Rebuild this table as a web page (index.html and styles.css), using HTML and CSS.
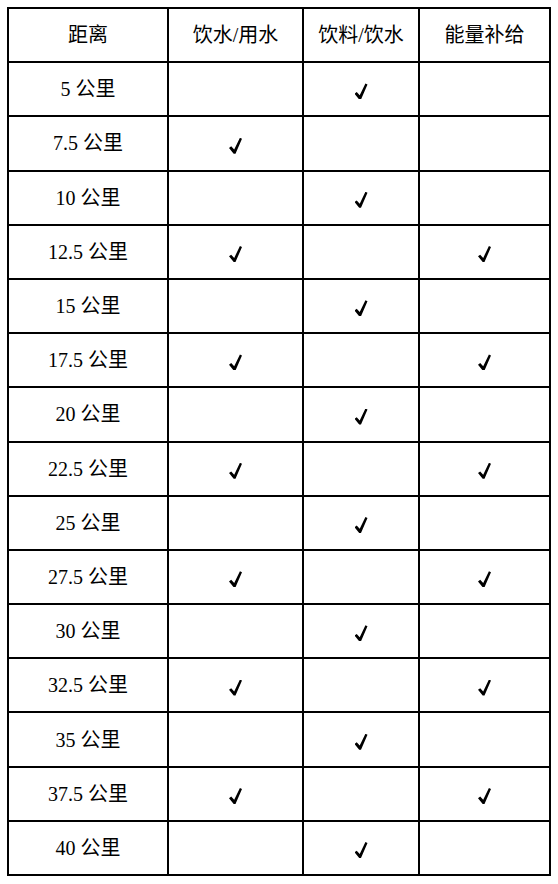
FILE: index.html
```html
<!DOCTYPE html>
<html lang="zh-CN">
<head>
<meta charset="utf-8">
<title>补给站</title>
<link rel="stylesheet" href="styles.css">
</head>
<body>
<table class="supply">
  <colgroup>
    <col class="c1"><col class="c2"><col class="c3"><col class="c4">
  </colgroup>
  <thead>
    <tr><th>距离</th><th>饮水/用水</th><th>饮料/饮水</th><th>能量补给</th></tr>
  </thead>
  <tbody>
    <tr><td>5 公里</td><td></td><td><span class="ck"></span></td><td></td></tr>
    <tr><td>7.5 公里</td><td><span class="ck"></span></td><td></td><td></td></tr>
    <tr><td>10 公里</td><td></td><td><span class="ck"></span></td><td></td></tr>
    <tr><td>12.5 公里</td><td><span class="ck"></span></td><td></td><td><span class="ck"></span></td></tr>
    <tr><td>15 公里</td><td></td><td><span class="ck"></span></td><td></td></tr>
    <tr><td>17.5 公里</td><td><span class="ck"></span></td><td></td><td><span class="ck"></span></td></tr>
    <tr><td>20 公里</td><td></td><td><span class="ck"></span></td><td></td></tr>
    <tr><td>22.5 公里</td><td><span class="ck"></span></td><td></td><td><span class="ck"></span></td></tr>
    <tr><td>25 公里</td><td></td><td><span class="ck"></span></td><td></td></tr>
    <tr><td>27.5 公里</td><td><span class="ck"></span></td><td></td><td><span class="ck"></span></td></tr>
    <tr><td>30 公里</td><td></td><td><span class="ck"></span></td><td></td></tr>
    <tr><td>32.5 公里</td><td><span class="ck"></span></td><td></td><td><span class="ck"></span></td></tr>
    <tr><td>35 公里</td><td></td><td><span class="ck"></span></td><td></td></tr>
    <tr><td>37.5 公里</td><td><span class="ck"></span></td><td></td><td><span class="ck"></span></td></tr>
    <tr><td>40 公里</td><td></td><td><span class="ck"></span></td><td></td></tr>
  </tbody>
</table>
</body>
</html>
```
FILE: styles.css
```css
html, body {
  margin: 0;
  padding: 0;
  background: #fff;
}
body {
  padding: 7px 0 0 7px;
  font-family: "Liberation Serif", "Noto Sans CJK SC", serif;
  font-size: 20px;
  color: #000;
}
.supply {
  border-collapse: collapse;
  table-layout: fixed;
  width: 542px;
}
.supply tr {
  height: 54.2px;
}
.c1 { width: 160px; }
.c2 { width: 135px; }
.c3 { width: 116px; }
.c4 { width: 131px; }
.supply th,
.supply td {
  border: 2px solid #000;
  text-align: center;
  vertical-align: middle;
  padding: 0;
  font-weight: normal;
  line-height: 1;
}
.ck {
  display: inline-block;
  width: 13px;
  height: 16px;
  vertical-align: middle;
  background: #000;
  clip-path: polygon(0% 64%, 17% 54%, 40% 74%, 84% 0%, 100% 6%, 50% 100%, 36% 100%);
}
```
